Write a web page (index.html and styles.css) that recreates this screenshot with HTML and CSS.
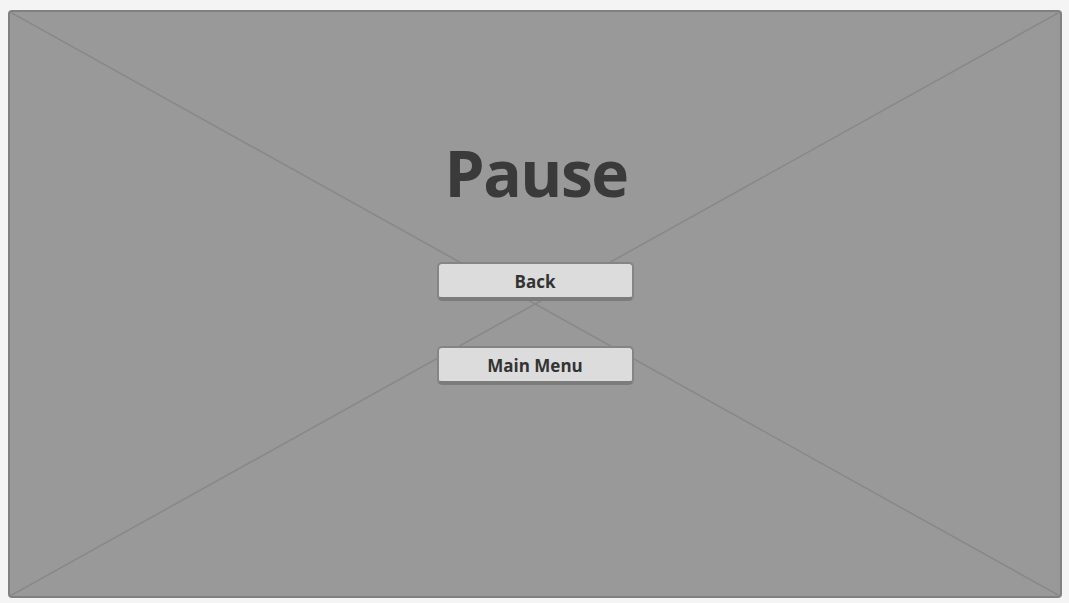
FILE: index.html
```html
<!DOCTYPE html>
<html>
<head>
<meta charset="utf-8">
<link rel="stylesheet" href="styles.css">
</head>
<body>
<div class="frame">
  <svg class="cross" viewBox="0 0 100 100" preserveAspectRatio="none">
    <line x1="0" y1="0" x2="100" y2="100" vector-effect="non-scaling-stroke"/>
    <line x1="100" y1="0" x2="0" y2="100" vector-effect="non-scaling-stroke"/>
  </svg>
  <div class="content">
    <h1 class="title">Pause</h1>
    <button class="btn">Back</button>
    <button class="btn">Main Menu</button>
  </div>
</div>
</body>
</html>
```
FILE: styles.css
```css
html, body {
  margin: 0;
  padding: 0;
  background: #f4f4f4;
}
body {
  padding: 10px 7px 5px 8px;
  font-family: "Open Sans", "Noto Sans", sans-serif;
}
.frame {
  position: relative;
  box-sizing: border-box;
  width: 1054px;
  height: 588px;
  background: #999999;
  border: 2px solid #808080;
  border-radius: 4px;
  overflow: hidden;
}
.cross {
  position: absolute;
  inset: 0;
  width: 100%;
  height: 100%;
}
.cross line {
  stroke: #888888;
  stroke-width: 1.5;
}
.content {
  position: relative;
  display: flex;
  flex-direction: column;
  align-items: center;
}
.title {
  margin: 129px 0 0 2px;
  font-size: 64px;
  line-height: 64px;
  height: 64px;
  font-weight: 700;
  color: #3a3a3a;
  letter-spacing: -1.5px;
}
.btn {
  box-sizing: border-box;
  width: 197px;
  height: 39px;
  margin-top: 57px;
  background: #dcdcdc;
  border: 2px solid #858585;
  border-bottom: 4px solid #7c7c7c;
  border-radius: 5px;
  font-family: "Open Sans", "Noto Sans", sans-serif;
  font-size: 17px;
  line-height: 20px;
  font-weight: 700;
  color: #333333;
  padding: 2px 0 0 0;
}
.btn + .btn {
  margin-top: 45px;
}
```
